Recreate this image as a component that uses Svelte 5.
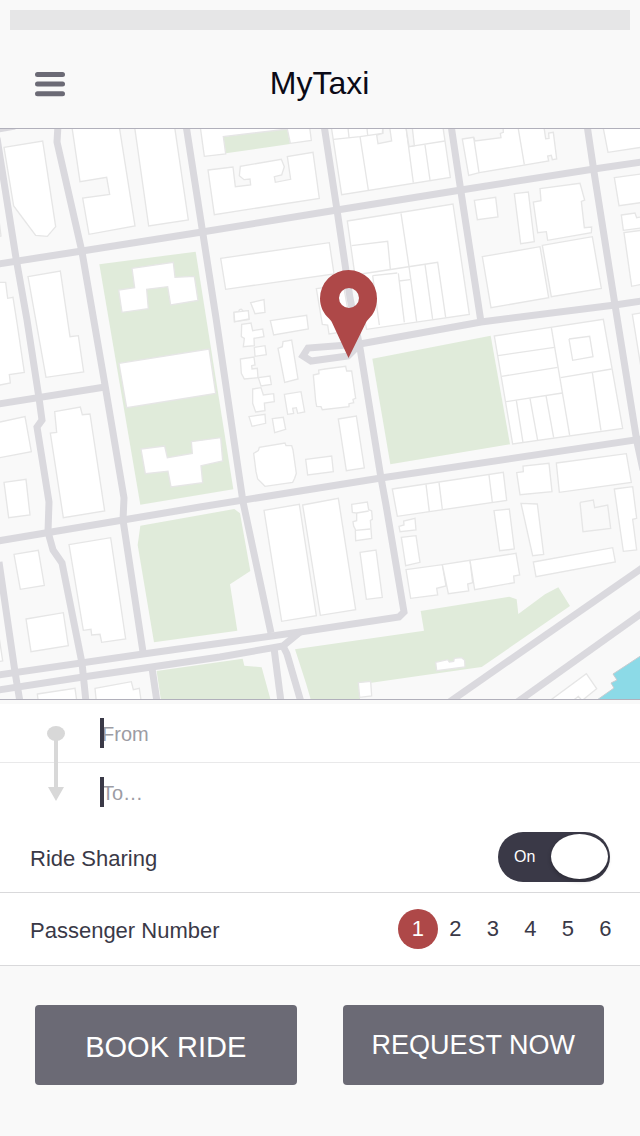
<script>
  let from = $state('');
  let to = $state('');
  let sharing = $state(true);
  let passengers = $state(1);

  // The map is drawn in nine tiles, each with its own origin, at three units to a map pixel.
  const parks = [
    { x: 0, y: 125, shapes: ['298,418 587,380 700,1093 421,1139'] },
    { x: 420, y: 315, shapes: ['-143,131 212,62 270,388 -89,448'] },
    {
      x: 0,
      y: 505,
      shapes: [
        '421,62 703,12 720,25 751,198 690,238 712,377 462,412 413,120',
        '470,498 728,461 733,482 785,487 816,600 485,600'
      ]
    },
    {
      x: 200,
      y: 505,
      shapes: [
        '285,433 672,377 662,318 928,275 950,283 955,327 1035,268 1075,247 1110,303 845,486 660,512 515,533 480,533 480,600 337,600 318,535'
      ]
    }
  ];

  const blocks = [
    {
      x: 0,
      y: 125,
      buildings: [
        '12,67 128,48 167,305 142,334 107,331 41,243',
        '215,0 240,170 320,157 329,208 248,219 267,328 405,303 357,0',
        '403,0 446,303 565,285 523,0',
        '84,455 181,438 210,635 235,632 251,741 138,757',
        '-10,472 17,472 23,520 39,517 52,600 73,742 28,749 31,774 -10,782',
        '-5,270 3,333 -5,335',
        '396,430 520,412 525,457 583,454 594,526 512,540 503,485 440,493 445,551 366,562 356,495 404,488'
      ],
      lots: []
    },
    {
      x: 200,
      y: 125,
      buildings: [
        '0,0 13,94 77,87 70,35 262,12 271,55 334,46 328,0',
        '24,135 99,126 106,185 152,180 150,162 132,164 118,152 121,124 244,103 253,125 245,150 223,155 226,172 272,163 262,95 339,82 358,220 43,269',
        '62,400 388,353 402,447 77,493',
        '102,562 115,560 119,554 124,553 130,559 144,557 147,583 103,590',
        '152,533 192,524 195,562 165,566 158,548',
        '393,0 425,209 751,157 728,0',
        '442,288 759,237 808,568 500,613 464,445',
        '349,491 430,480 455,617 387,627 383,600 367,598'
      ],
      lots: [
        '400,43 480,35 547,25 549,0',
        '480,35 505,195',
        '443,0 447,37',
        '500,0 503,30',
        '617,0 640,173',
        '627,65 735,48',
        '675,60 690,165',
        '455,362 563,349 571,432',
        '603,265 627,425',
        '464,450 660,420 713,412 737,577',
        '675,418 698,583',
        '627,425 650,590',
        '595,445 613,592',
        '597,468 630,464',
        '518,452 592,444',
        '518,452 538,600'
      ]
    },
    {
      x: 420,
      y: 125,
      buildings: [
        '127,42 161,37 165,48 243,38 241,25 250,22 249,0 371,0 377,41 387,40 386,24 400,22 410,102 397,104 394,91 383,93 386,108 178,143 146,151',
        '548,0 564,82 670,66 670,0',
        '583,158 670,146 670,232 597,242',
        '604,270 645,264 650,278 670,275 670,308 610,316',
        '612,323 670,315 670,477 635,484',
        '163,226 227,217 234,276 172,284',
        '283,206 325,201 343,350 302,356',
        '360,191 480,175 494,225 484,229 493,308 515,306 514,323 383,346 379,320 353,323 340,231 363,227',
        '187,395 360,365 386,518 213,548',
        '367,361 517,335 544,490 394,515',
        '637,568 670,563 670,770'
      ],
      lots: ['161,37 177,143', '293,0 313,119']
    },
    {
      x: 0,
      y: 315,
      buildings: [
        '357,145 627,102 647,235 380,278',
        '423,402 494,393 502,428 577,415 574,380 662,368 668,438 603,452 608,503 513,516 504,469 436,476',
        '-10,323 75,305 94,410 -10,430',
        '12,502 78,493 90,600 26,608',
        '164,290 241,276 247,299 270,297 314,588 190,608 151,354 170,352'
      ],
      lots: []
    },
    {
      x: 200,
      y: 315,
      buildings: [
        '102,-8 145,-13 147,12 104,20',
        '125,28 153,24 158,47 188,42 192,65 162,70 163,92 130,95 133,70 124,65',
        '211,17 320,1 325,42 221,60',
        '163,97 195,92 199,119 165,124',
        '121,132 162,126 165,150 155,152 156,162 172,160 174,188 133,192 124,175',
        '175,188 210,183 214,208 183,213',
        '158,222 183,218 190,240 221,236 223,260 193,264 195,287 167,291 158,265',
        '147,305 195,298 197,325 156,334',
        '217,311 250,307 257,343 224,353',
        '253,238 303,230 314,291 293,295 289,278 278,280 281,295 263,298',
        '234,100 247,95 249,80 275,75 294,192 254,202',
        '340,180 357,176 356,165 375,162 437,154 440,168 455,168 467,250 459,253 461,263 447,266 447,275 367,284 363,275 350,274 347,258',
        '415,312 469,303 493,459 439,467',
        '317,433 395,423 400,470 323,480',
        '161,415 175,407 178,397 255,384 258,392 275,392 279,405 289,475 284,490 278,502 195,514 186,505 173,492 168,470'
      ],
      lots: []
    },
    {
      x: 420,
      y: 315,
      buildings: [
        '223,63 550,13 608,340 278,387',
        '-83,522 250,472 260,556 -68,604',
        '290,473 310,470 309,453 387,445 396,530 300,539',
        '409,444 619,416 634,502 418,532',
        '303,565 352,567 371,718 338,722',
        '583,522 638,515 650,610 638,613 650,705 610,709'
      ],
      lots: [
        '234,122 403,97',
        '245,184 413,157',
        '258,260 427,234',
        '394,38 449,361',
        '289,256 309,382',
        '330,250 353,376',
        '378,242 401,368',
        '422,188 575,162',
        '517,173 543,347',
        '447,72 509,64 519,125 458,136 447,72',
        '18,508 28,590',
        '57,502 67,583',
        '207,480 217,562',
        '480,562 520,555 524,578 563,570 572,640 489,650 480,562'
      ]
    },
    {
      x: 0,
      y: 505,
      buildings: [
        '42,148 115,136 133,241 61,253',
        '78,342 190,323 205,422 93,440',
        '207,119 332,98 377,402 305,412 300,388 275,390 273,373 250,376',
        '112,567 225,550 232,600 116,600',
        '285,550 394,530 400,554 418,550 425,600 290,600',
        '-5,380 8,468 -5,470'
      ],
      lots: []
    },
    {
      x: 200,
      y: 505,
      buildings: [
        '192,16 298,-2 349,332 245,349',
        '308,0 415,-20 467,314 361,331',
        '455,-2 502,-9 506,14 515,18 517,43 511,46 515,100 467,107 466,73 461,63 459,50 470,47 470,24 457,22',
        '480,142 528,135 547,277 499,283',
        '597,64 612,60 611,48 645,40 648,75 600,80',
        '604,97 648,92 660,172 617,182',
        '475,533 512,529 515,573 479,577'
      ],
      lots: ['466,76 511,72', '470,24 506,18']
    },
    {
      x: 420,
      y: 505,
      buildings: [
        '-42,194 67,179 78,243 50,250 53,270 -28,280',
        '67,179 150,166 158,233 143,237 146,258 85,266',
        '150,166 288,145 299,210 281,213 283,233 164,254',
        '222,17 268,12 283,132 239,137',
        '340,171 578,128 586,171 348,215',
        '47,472 83,464 88,471 101,469 103,460 125,458 134,466 135,486 50,497',
        '380,594 499,506 530,551 470,600'
      ],
      lots: ['455,590 475,574 485,585']
    }
  ];

  const courts = [
    '530,30 534,56 575,48 568,0 549,0 549,25',
    '617,0 627,65 643,62 636,0'
  ];

  const roads = [
    '-3,138 16,258 27,320 39,398 42,420 37,427 49,502 48,532 53,550 62,563 82,663 86,702',
    '-1,562 15,672 20,702',
    '58,125 57,142 82,252 105,385 124,498 123,520 143,652',
    '186,125 202,228 216,318 243,502 271,633',
    '324,125 337,210 350,298 360,348 381,478 386,505 404,612 399,617 300,632 200,646 143,654 -2,675',
    '-2,690 83,677 220,657 283,646 300,632',
    '274,648 281,702',
    '283,646 287,654 301,702',
    '152,668 157,702',
    '451,125 461,192 481,322',
    '587,125 594,172 615,305 637,442 643,470',
    '-2,264 82,251 202,232 337,210 461,190 594,169 642,162',
    '642,301 615,305 481,322 360,344 308,348 303,356 311,361 348,356 358,346',
    '-2,404 105,387',
    '-2,541 123,520 200,507 381,478 642,439',
    '642,568 448,703',
    '642,613 516,703',
    '-2,129 15,126'
  ];
</script>

<div class="screen">
  <div class="status"></div>

  <header>
    <button class="menu" type="button" aria-label="Menu">
      <svg viewBox="0 0 30 25" width="30" height="25" aria-hidden="true">
        <rect width="30" height="5" rx="2.5" />
        <rect y="9.6" width="30" height="5" rx="2.5" />
        <rect y="19.2" width="30" height="5" rx="2.5" />
      </svg>
    </button>
    <h1>MyTaxi</h1>
  </header>

  <svg class="map" viewBox="0 129 640 570" role="img" aria-label="Map">
    {#each parks as tile}
      <g class="park" transform="translate({tile.x} {tile.y}) scale(0.33333)">
        {#each tile.shapes as points}<polygon {points} />{/each}
      </g>
    {/each}
    <g class="park" transform="translate(200 125) scale(0.33333)">
      <polygon points="70,35 262,12 270,57 78,85" />
    </g>
    {#each blocks as tile}
      <g transform="translate({tile.x} {tile.y}) scale(0.33333)">
        {#each tile.buildings as points}<polygon class="building" {points} />{/each}
        {#each tile.lots as points}<polyline class="lot" {points} />{/each}
      </g>
    {/each}
    <g transform="translate(200 125) scale(0.33333)">
      {#each courts as points}<polygon class="building court" {points} />{/each}
    </g>
    {#each roads as points}<polyline class="road" {points} />{/each}
    <polygon class="water" points="642,655 613,674 617,680 611,683 614,688 597,700 642,700" />
    <path
      class="pin"
      fill-rule="evenodd"
      d="M348.5 270a28.5 28.5 0 0 1 28.500 28.500c0 9-3.500 16-8 20q-2 2-3 4L348.500 358 332 322.500q-1-2-3-4c-5.500-5-9-12-9-20A28.500 28.500 0 0 1 348.500 270zM349 288a10 10 0 1 0 0 20 10 10 0 0 0 0-20z"
    />
  </svg>

  <form onsubmit={(e) => e.preventDefault()}>
    <div class="route">
      <label class="stop">
        <span class="caret"></span>
        <input type="text" aria-label="From" placeholder="From" bind:value={from} />
      </label>
      <label class="stop">
        <span class="caret"></span>
        <input type="text" aria-label="To" placeholder="To…" bind:value={to} />
      </label>
      <svg class="arrow" viewBox="0 0 18 75" width="18" height="75" aria-hidden="true">
        <ellipse cx="9" cy="7.5" rx="9" ry="7.5" />
        <path d="M7 8h4v53h6L9 75 1 61h6z" />
      </svg>
    </div>

    <div class="row sharing">
      <label for="sharing">Ride Sharing</label>
      <span class="toggle">
        <input id="sharing" type="checkbox" role="switch" bind:checked={sharing} />
        <span class="state">{sharing ? 'On' : 'Off'}</span>
        <span class="knob"></span>
      </span>
    </div>

    <fieldset class="row">
      <legend>Passenger Number</legend>
      <div class="numbers">
        {#each [1, 2, 3, 4, 5, 6] as n}
          <label class="number">
            <input type="radio" name="passengers" value={n} bind:group={passengers} />
            <span>{n}</span>
          </label>
        {/each}
      </div>
    </fieldset>

    <div class="actions">
      <button class="book" type="button">BOOK RIDE</button>
      <button class="request" type="submit">REQUEST NOW</button>
    </div>
  </form>
</div>

<style>
  :global(body) {
    margin: 0;
    background: #f9f9f9;
  }
  .screen {
    box-sizing: border-box;
    min-height: 100vh;
    padding-top: 10px;
    background: #f9f9f9;
    color: #3a3947;
    font-family: 'Liberation Sans', Arial, sans-serif;
    font-size: 22px;
  }
  .status {
    height: 20px;
    margin: 0 10px;
    background: #e6e6e7;
  }
  header {
    display: grid;
    grid-template-columns: 1fr auto 1fr;
    align-items: center;
    height: 98px;
    padding: 0 36px 0 35px;
    border-bottom: 1px solid #b1b0bb;
  }
  .menu {
    justify-self: start;
    padding: 10px 0 0;
    border: 0;
    background: none;
  }
  .menu svg {
    display: block;
    fill: #6b6a75;
  }
  h1 {
    margin: 0;
    padding-top: 8px;
    color: #0b0a16;
    font-size: 32px;
    font-weight: 400;
    line-height: 40px;
  }
  .map {
    display: block;
    width: 100%;
    height: auto;
    border-bottom: 1px solid #b1b0bb;
    background: #f9f9f9;
  }
  .park {
    fill: #e0ebda;
  }
  .building {
    fill: #fff;
    stroke: #e6e6e6;
    stroke-width: 4;
  }
  .court {
    fill: #f9f9f9;
  }
  .lot {
    fill: none;
    stroke: #e6e6e6;
    stroke-width: 4;
  }
  .road {
    fill: none;
    stroke: #dad9de;
    stroke-width: 7;
  }
  .water {
    fill: #8cdae7;
    stroke: #c9ccd0;
    stroke-width: 1;
  }
  .pin {
    fill: #ae4848;
  }
  form {
    padding-top: 4px;
  }
  .route {
    position: relative;
    background: #fff;
  }
  .stop {
    display: flex;
    align-items: center;
    height: 58px;
    padding: 0 30px 0 100px;
  }
  .stop:first-child {
    border-bottom: 1px solid #e9e9ea;
  }
  .caret {
    z-index: 1;
    width: 4px;
    height: 30px;
    background: #3a3947;
  }
  .stop input {
    flex: 1;
    min-width: 0;
    margin-left: -2px;
    padding: 2px 0 0;
    border: 0;
    outline: 0;
    background: none;
    color: inherit;
    font: inherit;
    font-size: 20px;
  }
  .stop input::placeholder {
    color: #9c9ca4;
    opacity: 1;
  }
  .arrow {
    position: absolute;
    top: 22px;
    left: 47px;
    fill: #d8d8d8;
  }
  .row {
    display: flex;
    align-items: center;
    justify-content: space-between;
    height: 72px;
    min-width: 0;
    margin: 0;
    padding: 0 16px 0 30px;
    border: 0;
    border-bottom: 1px solid #d9d9db;
    background: #fff;
  }
  .sharing {
    height: 71px;
    padding-right: 30px;
  }
  .sharing label,
  legend {
    padding: 4px 0 0;
  }
  legend {
    float: left;
  }
  .toggle {
    position: relative;
    display: flex;
    align-items: center;
    justify-content: space-between;
    box-sizing: border-box;
    width: 112px;
    height: 50px;
    padding: 0 2px 0 16px;
    border-radius: 25px;
    background: #3a3947;
    color: #fff;
    font-size: 16px;
  }
  .toggle input {
    position: absolute;
    inset: 0;
    width: 100%;
    height: 100%;
    margin: 0;
    opacity: 0;
  }
  .knob {
    width: 57px;
    height: 45px;
    border-radius: 50%;
    background: #fff;
    box-shadow: 0 2px 4px rgba(0, 0, 0, 0.25);
  }
  .toggle:has(input:not(:checked)) {
    flex-direction: row-reverse;
    padding: 0 16px 0 2px;
    background: #9c9ca4;
  }
  .numbers {
    display: grid;
    grid-template-columns: repeat(6, minmax(0, 1fr));
    width: 225px;
  }
  .number {
    position: relative;
    display: flex;
    justify-content: center;
  }
  .number input {
    position: absolute;
    opacity: 0;
  }
  .number span {
    flex: none;
    width: 40px;
    height: 40px;
    border-radius: 50%;
    line-height: 40px;
    text-align: center;
  }
  .number input:checked + span {
    background: #ae4848;
    color: #fff;
  }
  .actions {
    display: grid;
    grid-template-columns: 1fr 1fr;
    gap: 46px;
    padding: 39px 36px 50px 35px;
  }
  .actions button {
    height: 80px;
    padding: 0;
    border: 0;
    border-radius: 4px;
    background: #6b6a75;
    color: #fff;
    font-family: inherit;
  }
  .actions .book {
    padding-top: 4px;
    font-size: 29px;
  }
  .actions .request {
    font-size: 27px;
  }
</style>
